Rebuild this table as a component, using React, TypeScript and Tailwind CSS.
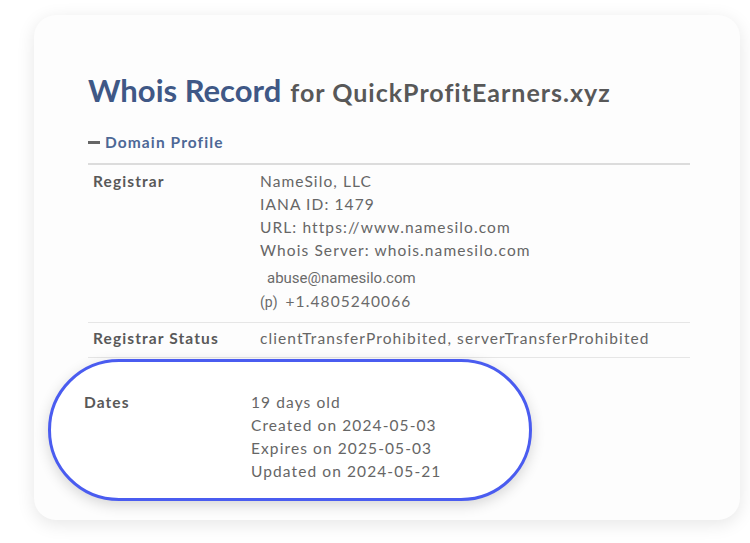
export default function App() {
  return (
    <div className="w-[750px] h-[543px] bg-white pt-[15px] pl-[34px] font-['Lato',sans-serif]">
      <div className="w-[706px] h-[505px] rounded-[22px] bg-[#fdfdfd] shadow-[0_4px_18px_rgba(0,0,0,0.10)] pl-[54px] pt-[60px]">
        <h1 className="flex items-baseline gap-[9px] leading-none">
          <span className="text-[31px] font-bold text-[#3f5886]">Whois Record</span>
          <span className="text-[25px] font-bold tracking-[1px] text-[#585858]">for QuickProfitEarners.xyz</span>
        </h1>

        <div className="mt-[25px] flex items-center gap-[5px] text-[15.5px] font-bold tracking-[1.1px] text-[#4d6896]">
          <span className="inline-block w-[12px] h-[3px] bg-[#666]" />
          <span>Domain Profile</span>
        </div>

        <div className="mt-[9px] w-[602px] border-t-2 border-[#dcdcdc] text-[15.5px] tracking-[1.1px] text-[#666]">
          <div className="flex border-b border-[#e6e6e6] pt-[5px] pb-[8px] leading-[23px]">
            <div className="w-[172px] pl-[5px] font-bold text-[#595959]">Registrar</div>
            <div>
              <div>NameSilo, LLC</div>
              <div>IANA ID: 1479</div>
              <div>URL: https://www.namesilo.com</div>
              <div>Whois Server: whois.namesilo.com</div>
              <div className="mt-[5px] pl-[7px] text-[15px] tracking-normal font-['Roboto',sans-serif] text-[#6a6a6a]">abuse@namesilo.com</div>
              <div className="text-[#6a6a6a]">
                <span className="text-[14px] tracking-normal font-['Roboto',sans-serif]">(p)</span>
                <span className="ml-[8px]">+1.4805240066</span>
              </div>
            </div>
          </div>
          <div className="flex border-b border-[#e6e6e6] pt-[4px] pb-[7px] leading-[23px]">
            <div className="w-[172px] pl-[5px] font-bold text-[#595959]">Registrar Status</div>
            <div>clientTransferProhibited, serverTransferProhibited</div>
          </div>
          <div className="ml-[-40px] mt-[1px] w-[484px] h-[142px] rounded-full border-[3px] border-[#4a5cf0] bg-white shadow-[0_4px_14px_rgba(0,0,0,0.16)] flex pt-[29px] pl-[33px] leading-[23px]">
            <div className="w-[167px] font-bold text-[#595959]">Dates</div>
            <div>
              <div>19 days old</div>
              <div>Created on 2024-05-03</div>
              <div>Expires on 2025-05-03</div>
              <div>Updated on 2024-05-21</div>
            </div>
          </div>
        </div>
      </div>
    </div>
  );
}
